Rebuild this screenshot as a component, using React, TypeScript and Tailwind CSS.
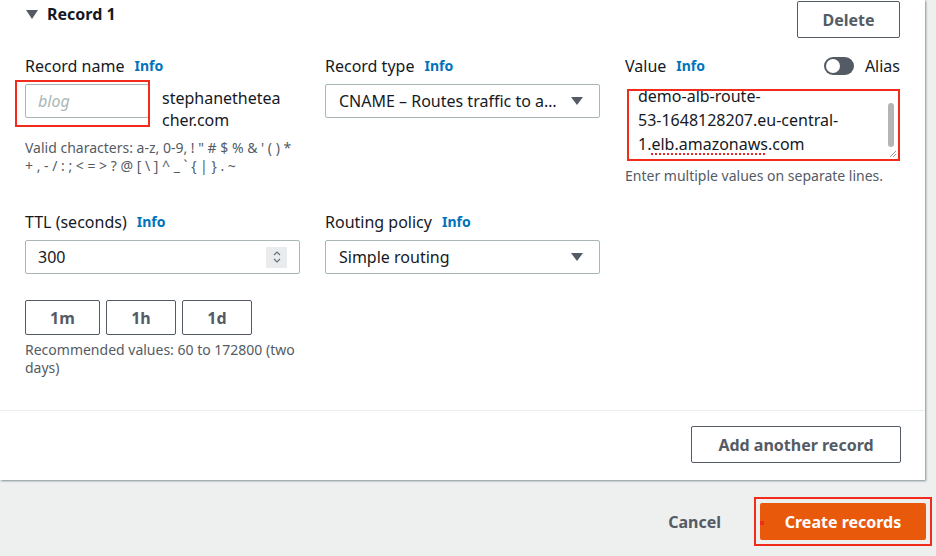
import React from 'react';

const font = { fontFamily: '"Noto Sans", "Open Sans", Arial, sans-serif' };

function Info() {
  return <span className="ml-[10px] text-[14px] font-bold text-[#0073bb]">Info</span>;
}

function Caret() {
  return (
    <svg width="14" height="10" viewBox="0 0 14 10" className="shrink-0">
      <path d="M1 1h12L7 9z" fill="#545b64" />
    </svg>
  );
}

function Select({ value }: { value: string }) {
  return (
    <div className="flex h-[34px] w-[275px] items-center justify-between rounded-[2px] border border-[#aab7b8] pl-[13px] pr-[15px] text-[16px] text-[#16191f]">
      <span className="whitespace-nowrap">{value}</span>
      <Caret />
    </div>
  );
}

export default function App() {
  return (
    <div style={font} className="h-[556px] w-[936px] overflow-hidden bg-[#eef0f0] text-[#16191f]">
      <div className="flex h-[480px] w-[925px] flex-col bg-white shadow-[1px_1px_2px_rgba(0,28,36,0.45)]">
        {/* header */}
        <div className="flex h-[40px] items-start justify-between pl-[26px] pr-[25px]">
          <div className="mt-[3px] flex items-center gap-[9px] leading-[22px]">
            <svg width="12" height="10" viewBox="0 0 12 10">
              <path d="M0 1h12L6 10z" fill="#545b64" />
            </svg>
            <span className="text-[16px] font-bold">Record 1</span>
          </div>
          <button className="mt-[1px] h-[37px] w-[103px] rounded-[2px] border border-[#545b64] text-[16px] font-bold text-[#545b64]">
            Delete
          </button>
        </div>

        {/* row 1 */}
        <div className="ml-[25px] mt-[15px] grid h-[156px] w-[875px] grid-cols-3 gap-x-[25px]">
          <div>
            <div className="flex items-center text-[16px] leading-[22px]">
              Record name <Info />
            </div>
            <div className="mt-[7px] flex items-start">
              <div className="relative">
                <div className="flex h-[34px] w-[124px] items-center rounded-[2px] border border-[#aab7b8] pl-[12px] text-[16px] italic text-[#aab7b8]">
                  blog
                </div>
                <div className="absolute -left-[10px] -top-[4px] h-[47px] w-[135px] border-2 border-[#f22b1c]" />
              </div>
              <div className="ml-[13px] mt-[3px] text-[16px] leading-[22px]">
                stephanethetea
                <br />
                cher.com
              </div>
            </div>
            <div className="mt-[8px] whitespace-nowrap text-[14px] leading-[18px] text-[#545b64]">
              Valid characters: a-z, 0-9, ! " # $ % &amp; ' ( ) *
              <br />+ , - / : ; &lt; = &gt; ? @ [ \ ] ^ _ ` {'{'} | {'}'} . ~
            </div>
          </div>

          <div>
            <div className="flex items-center text-[16px] leading-[22px]">
              Record type <Info />
            </div>
            <div className="mt-[7px]">
              <Select value="CNAME – Routes traffic to a…" />
            </div>
          </div>

          <div>
            <div className="flex items-center justify-between text-[16px] leading-[22px]">
              <div className="flex items-center">
                Value <Info />
              </div>
              <div className="flex items-center">
                <div className="flex h-[18px] w-[30px] items-center rounded-full bg-[#545b64] px-[2px]">
                  <div className="h-[14px] w-[14px] rounded-full bg-white" />
                </div>
                <span className="ml-[11px]">Alias</span>
              </div>
            </div>
            <div className="relative ml-[2px] mt-[12px] h-[72px] w-[273px] overflow-hidden border-2 border-[#f22b1c] bg-white pl-[9px] text-[16px] leading-[24px]">
              <div className="-mt-[7px]">
                demo-alb-route-
                <br />
                53-1648128207.eu-central-
                <br />
                1.<span className="underline decoration-[#e4272a] decoration-dotted decoration-2 underline-offset-[3px]">elb.amazonaws</span>.com
              </div>
              <div className="absolute right-[4px] top-[12px] h-[44px] w-[6px] rounded-full bg-[#b4b4b4]" />
              <svg className="absolute bottom-[1px] right-[1px]" width="8" height="8" viewBox="0 0 8 8">
                <path d="M7 1L1 7M7 4L4 7" stroke="#999" strokeWidth="1" />
              </svg>
            </div>
            <div className="mt-[6px] whitespace-nowrap text-[14px] leading-[18px] text-[#545b64]">
              Enter multiple values on separate lines.
            </div>
          </div>
        </div>

        {/* row 2 */}
        <div className="ml-[25px] grid w-[875px] grid-cols-3 gap-x-[25px]">
          <div>
            <div className="flex items-center text-[16px] leading-[22px]">
              TTL (seconds) <Info />
            </div>
            <div className="mt-[7px] flex h-[34px] w-[275px] items-center justify-between rounded-[2px] border border-[#aab7b8] pl-[12px] pr-[12px] text-[16px]">
              <span>300</span>
              <div className="flex h-[21px] w-[21px] flex-col items-center justify-center bg-[#e9ebed]">
                <svg width="10" height="16" viewBox="0 0 10 16">
                  <path d="M2 6l3-3 3 3M2 10l3 3 3-3" fill="none" stroke="#687078" strokeWidth="1.2" />
                </svg>
              </div>
            </div>
            <div className="mt-[26px] flex gap-[6px]">
              {['1m', '1h', '1d'].map((t, i) => (
                <button
                  key={t}
                  className={`h-[35px] rounded-[2px] border border-[#545b64] text-[16px] font-bold text-[#545b64] ${i === 0 ? 'w-[75px]' : 'w-[70px]'}`}
                >
                  {t}
                </button>
              ))}
            </div>
            <div className="mt-[6px] w-[285px] text-[14px] leading-[18px] text-[#545b64]">
              Recommended values: 60 to 172800 (two days)
            </div>
          </div>

          <div>
            <div className="flex items-center text-[16px] leading-[22px]">
              Routing policy <Info />
            </div>
            <div className="mt-[7px]">
              <Select value="Simple routing" />
            </div>
          </div>
          <div />
        </div>

        <div className="flex-1" />
        <div className="flex h-[70px] items-start justify-end border-t border-[#eaeded] pr-[24px] pt-[15px]">
          <button className="h-[37px] w-[210px] rounded-[2px] border border-[#545b64] text-[16px] font-bold text-[#545b64]">
            Add another record
          </button>
        </div>
      </div>

      {/* footer actions */}
      <div className="mt-[17px] flex items-center justify-end pr-[4px]">
        <span className="text-[16px] font-bold text-[#545b64]">Cancel</span>
        <div className="relative ml-[33px] border-2 border-[#f22b1c] p-[4px]">
          <div className="flex h-[37px] w-[166px] items-center justify-center rounded-[2px] bg-[#e8590c] text-[16px] font-bold text-white">
            Create records
          </div>
          <div className="absolute left-[4px] top-[22px] h-[4px] w-[4px] bg-[#f22b1c]" />
        </div>
      </div>
    </div>
  );
}
